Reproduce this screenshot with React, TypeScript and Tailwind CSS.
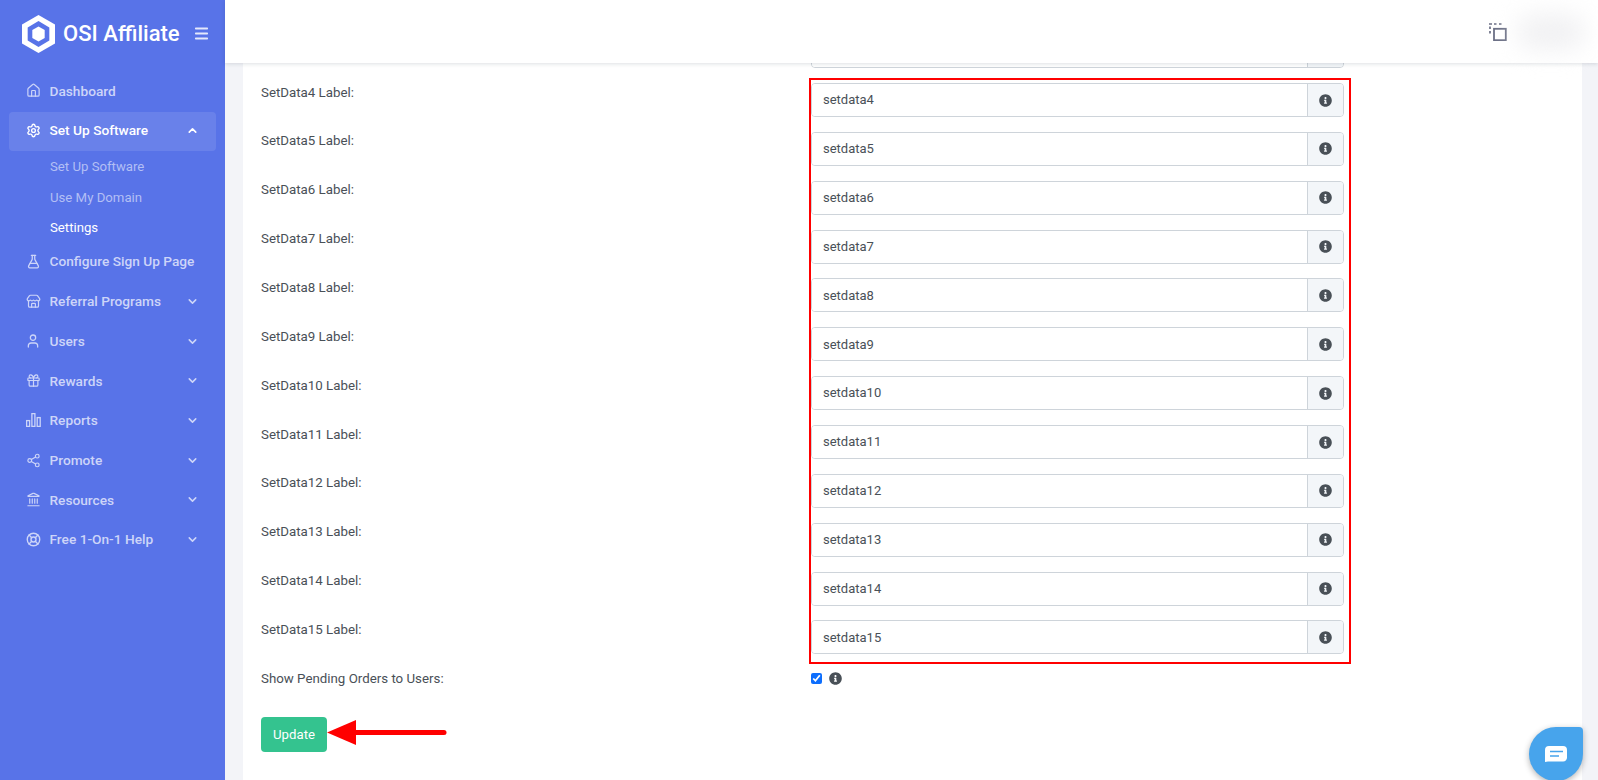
import { ReactNode } from "react";
import {
  ChevronDown,
  ChevronUp,
  FlaskConical,
  Gift,
  Home,
  Landmark,
  LifeBuoy,
  Menu,
  Settings,
  Share2,
  Store,
  User,
} from "lucide-react";
import { FaInfoCircle } from "react-icons/fa";

const rows = [4, 5, 6, 7, 8, 9, 10, 11, 12, 13, 14, 15];

function BarsIcon() {
  return (
    <svg width="15" height="14" viewBox="0 0 15 14" fill="none" stroke="currentColor" strokeWidth="1.3">
      <rect x="0.6" y="7.6" width="3" height="5.8" />
      <rect x="5.9" y="0.6" width="3" height="12.8" />
      <rect x="11.2" y="4.6" width="3" height="8.8" />
    </svg>
  );
}

function NavItem({ icon, label, open, more }: { icon: ReactNode; label: string; open?: boolean; more?: boolean }) {
  return (
    <div
      className={`mx-[9px] flex h-[39.7px] items-center rounded pl-[16px] pr-[17px] text-[13.7px] font-medium ${
        open ? "mt-[1px] bg-white/10 pb-[2px] text-white" : "text-[#cdd5f8]"
      }`}
    >
      <span className="flex w-[16px] justify-center">{icon}</span>
      <span className="ml-[8.5px] flex-1">{label}</span>
      {open ? <ChevronUp size={13} strokeWidth={3} /> : null}
      {more ? <ChevronDown size={13} strokeWidth={2.8} /> : null}
    </div>
  );
}

function Row({ label, value }: { label: string; value: string }) {
  return (
    <div className="flex">
      <label className="w-[550px] pt-[0.5px] text-[13.3px] leading-[17px] text-[#495057]">{label}</label>
      <div className="flex h-[34px] w-[533px] overflow-hidden rounded border border-[#ced4da]">
        <div className="flex flex-1 items-center bg-white pl-[11px] text-[13px] text-[#495057]">{value}</div>
        <div className="flex w-[36px] items-center justify-center border-l border-[#ced4da] bg-[#f3f6f9] text-[#495057]">
          <FaInfoCircle size={13} />
        </div>
      </div>
    </div>
  );
}

export default function App() {
  return (
    <div className="relative flex h-[780px] w-[1598px] overflow-hidden bg-[#f3f4f8] font-['Roboto','Liberation_Sans',sans-serif]">
      {/* sidebar */}
      <aside className="flex w-[225px] shrink-0 flex-col bg-[#5873e8]">
        <div className="flex h-[71px] items-center pb-[4px] pl-[22px]">
          <svg width="33" height="38" viewBox="0 0 32 38" preserveAspectRatio="none">
            <path d="M16 0L32 9.5V28.5L16 38L0 28.5V9.5Z" fill="#fff" />
            <path d="M16 6L26.5 12.5V25.5L16 32L5.5 25.5V12.5Z" fill="#5873e8" />
            <path d="M16 11.5L22 15V23L16 26.5L10 23V15Z" fill="#fff" />
          </svg>
          <span className="ml-[8px] w-[122px] whitespace-nowrap text-[22px] font-medium text-white">OSI Affiliate</span>
          <Menu size={17} strokeWidth={2.6} className="ml-[8px] text-[#e4e8fb]" />
        </div>
        <nav className="flex flex-col">
          <NavItem icon={<Home size={15} strokeWidth={1.9} />} label="Dashboard" />
          <NavItem icon={<Settings size={15} strokeWidth={2.2} />} label="Set Up Software" open />
          <div className="flex flex-col pl-[50px] text-[13.2px]">
            <div className="flex h-[31px] items-center text-[#b3bff5]">Set Up Software</div>
            <div className="flex h-[31px] items-center text-[#b3bff5]">Use My Domain</div>
            <div className="flex h-[28.5px] items-center text-white">Settings</div>
          </div>
          <NavItem icon={<FlaskConical size={15} strokeWidth={2} />} label="Configure Sign Up Page" />
          <NavItem icon={<Store size={15} strokeWidth={1.9} />} label="Referral Programs" more />
          <NavItem icon={<User size={16} strokeWidth={1.9} />} label="Users" more />
          <NavItem icon={<Gift size={15} strokeWidth={1.9} />} label="Rewards" more />
          <NavItem icon={<BarsIcon />} label="Reports" more />
          <NavItem icon={<Share2 size={15} strokeWidth={1.9} />} label="Promote" more />
          <NavItem icon={<Landmark size={15} strokeWidth={1.9} />} label="Resources" more />
          <NavItem icon={<LifeBuoy size={15} strokeWidth={2.2} />} label="Free 1-On-1 Help" more />
        </nav>
      </aside>

      <div className="flex min-w-0 flex-1 flex-col">
        {/* header */}
        <header className="relative z-10 flex h-[63px] shrink-0 items-center justify-end bg-white pr-[13px] shadow-[0_1px_4px_rgba(15,34,58,0.14)]">
          <svg width="18" height="18" viewBox="0 0 18 18" fill="none" stroke="#6b6f85">
            <path d="M0 1h3M5 1h2.5M10 1h2.5M1 3.5v2.5M1 8v2.5" strokeWidth="1.7" />
            <rect x="5" y="5.8" width="11.8" height="11.4" strokeWidth="1.8" />
          </svg>
          <div className="ml-[10px] h-[36px] w-[68px] rounded-full bg-[#f1f1f3] blur-md" />
        </header>

        {/* form card */}
        <main className="ml-[18px] mr-[16px] flex-1 overflow-hidden bg-white pl-[18px]">
          <div className="-mt-[28.75px] flex flex-col gap-y-[14.85px]">
            <Row label="" value="" />
            {rows.map((n) => (
              <Row key={n} label={`SetData${n} Label:`} value={`setdata${n}`} />
            ))}
          </div>
          <div className="mt-[15.9px] flex items-center">
            <span className="w-[550px] text-[13.3px] leading-[17px] text-[#495057]">Show Pending Orders to Users:</span>
            <input type="checkbox" defaultChecked className="h-[11px] w-[11px] accent-[#0d6efd]" />
            <FaInfoCircle size={13} className="ml-[7px] text-[#495057]" />
          </div>
          <button className="mt-[30px] flex h-[35px] w-[66px] items-center justify-center rounded bg-[#34c38f] text-[13.2px] text-white">
            Update
          </button>
        </main>
      </div>

      {/* annotations */}
      <div className="pointer-events-none absolute left-[809px] top-[78px] h-[586px] w-[542px] border-2 border-[#ff0000]" />
      <svg width="120" height="26" viewBox="0 0 120 26" className="absolute left-[327px] top-[720px]">
        <path d="M0 12.5L29 0V25Z" fill="#ff0000" />
        <path d="M28 12.5H117" stroke="#ff0000" strokeWidth="5" strokeLinecap="round" />
      </svg>

      {/* chat bubble */}
      <div className="absolute left-[1529px] top-[727px] flex h-[54px] w-[54px] items-center justify-center rounded-[27px_4px_27px_27px] bg-[#47a4ec] shadow-[0_2px_6px_rgba(0,0,0,0.3)]">
        <svg width="22" height="16" viewBox="0 0 22 16">
          <path d="M4 0H18A4 4 0 0 1 22 4V11A4 4 0 0 1 18 15.5H3L0 16V4A4 4 0 0 1 4 0Z" fill="#fff" />
          <path d="M5 5.5H18M5 10H14" stroke="#47a4ec" strokeWidth="1.4" />
        </svg>
      </div>
    </div>
  );
}
